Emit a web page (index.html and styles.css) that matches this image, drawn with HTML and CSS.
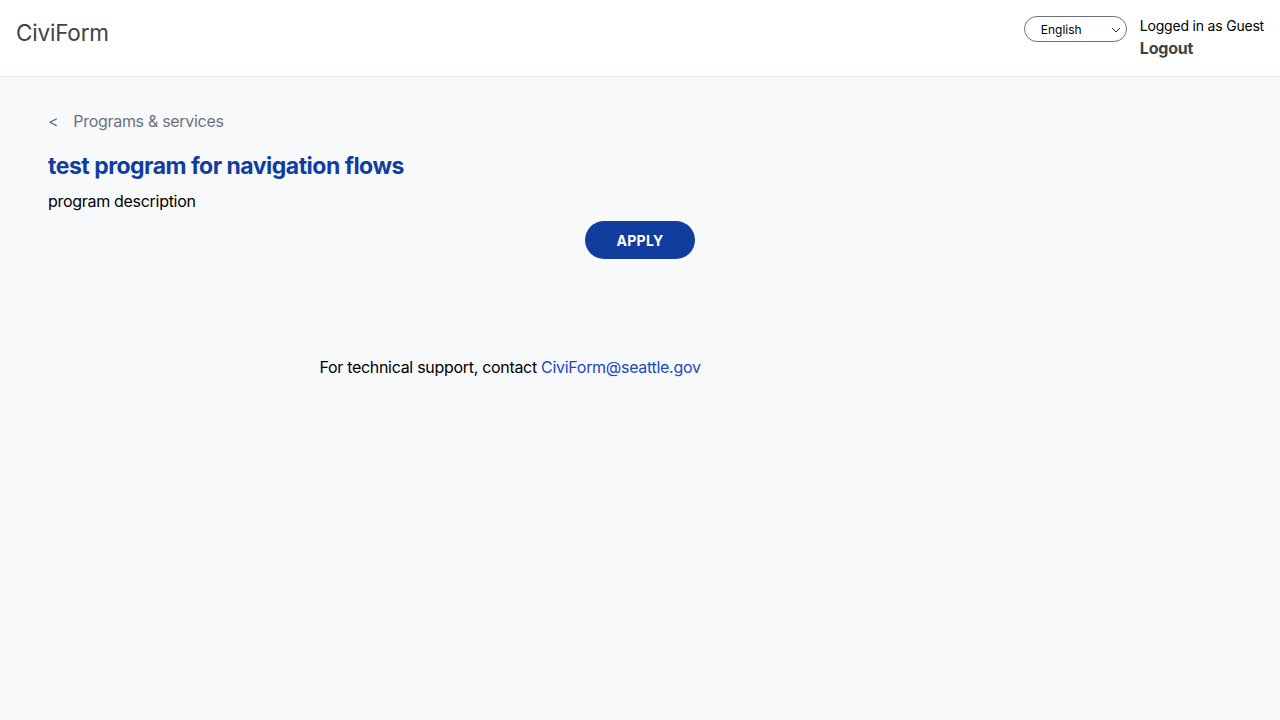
FILE: index.html
```html
<!DOCTYPE html>
<html lang="en">
<head>
<meta charset="utf-8">
<title>CiviForm</title>
<link rel="stylesheet" href="styles.css">
</head>
<body>
<header class="topbar">
  <div class="brand">CiviForm</div>
  <div class="account">
    <div class="lang-select">
      <span class="lang-label">English</span>
      <svg class="chev" width="10" height="6" viewBox="0 0 10 6"><path d="M1 1 L5 5 L9 1" fill="none" stroke="#333" stroke-width="1"/></svg>
    </div>
    <div class="user">
      <div class="user-line">Logged in as Guest</div>
      <a class="logout" href="#">Logout</a>
    </div>
  </div>
</header>
<main class="content">
  <a class="back" href="#"><span class="back-arrow">&lt;</span><span>Programs &amp; services</span></a>
  <h1 class="title">test program for navigation flows</h1>
  <p class="desc">program description</p>
  <div class="apply-row"><button class="apply">APPLY</button></div>
</main>
<footer class="support">For technical support, contact <a href="#" class="mail">CiviForm@seattle.gov</a></footer>
</body>
</html>
```
FILE: styles.css
```css
* { box-sizing: border-box; }
html, body { margin: 0; padding: 0; }
body {
  font-family: Inter, "Liberation Sans", sans-serif;
  background: #f8f9fb;
  color: #000;
  min-height: 720px;
  letter-spacing: -0.3px;
}
.topbar {
  height: 77px;
  background: #fff;
  border-bottom: 1px solid #e5e7eb;
  display: flex;
  justify-content: space-between;
  align-items: flex-start;
  padding: 0 16px;
}
.brand {
  font-size: 22.5px;
  color: #424242;
  margin-top: 19px;
  letter-spacing: -0.2px;
}
.account {
  display: flex;
  align-items: flex-start;
  gap: 13px;
  margin-top: 16px;
}
.lang-select {
  width: 103px;
  height: 26px;
  border: 1px solid #6b7280;
  border-radius: 13px;
  display: flex;
  align-items: center;
  justify-content: space-between;
  padding: 0 5px 0 16px;
  font-size: 12px;
  color: #000;
  letter-spacing: 0;
}
.chev { margin-top: 1px; }
.user { font-size: 14px; line-height: 20px; letter-spacing: -0.2px; }
.user-line { color: #000; }
.logout {
  display: block;
  font-size: 16px;
  font-weight: 700;
  color: #424242;
  text-decoration: none;
  margin-top: 2px;
}
.content { padding: 34px 48px 0 48px; }
.back {
  display: flex;
  gap: 15px;
  color: #6b7280;
  font-size: 16px;
  text-decoration: none;
  line-height: 20px;
}
.title {
  margin: 19px 0 0 0;
  font-size: 23px;
  font-weight: 700;
  color: #113d9f;
  line-height: 32px;
  letter-spacing: -0.5px;
}
.desc { margin: 7px 0 0 0; font-size: 16px; line-height: 24px; }
.apply-row { display: flex; justify-content: center; margin: 8px -48px 0 -48px; }
.apply {
  width: 110px;
  height: 38px;
  border: none;
  border-radius: 19px;
  background: #113d9f;
  color: #fff;
  font-family: inherit;
  font-size: 14px;
  font-weight: 700;
  letter-spacing: 0.3px;
}
.support {
  width: 1020px;
  text-align: center;
  margin-top: 96px;
  font-size: 16px;
  line-height: 24px;
}
.mail { text-decoration: none; color: #2048c0; }
```
